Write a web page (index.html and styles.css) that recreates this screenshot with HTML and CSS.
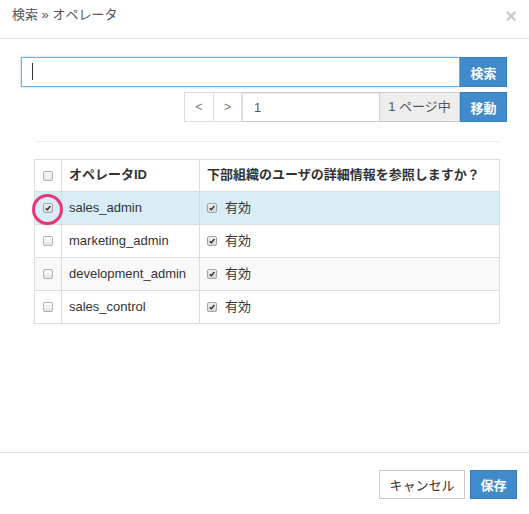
FILE: index.html
```html
<!DOCTYPE html>
<html lang="ja">
<head>
    <meta charset="UTF-8">
    <meta name="viewport" content="width=device-width, initial-scale=1.0">
    <title>検索 » オペレータ</title>
    <link rel="stylesheet" href="styles.css">
</head>
<body>
    <div class="modal">
        <div class="modal-header">
            <div class="modal-title">検索 » オペレータ</div>
            <button class="close" type="button">×</button>
        </div>

        <div class="modal-body">
            <div class="search-row">
                <div class="search-field">
                    <input type="text" class="search-input">
                    <span class="caret"></span>
                </div>
                <button class="btn btn-primary" type="button">検索</button>
            </div>

            <div class="pager">
                <button class="btn btn-page" type="button">&lt;</button>
                <button class="btn btn-page" type="button">&gt;</button>
                <input type="text" class="page-input" value="1">
                <span class="page-addon">1 ページ中</span>
                <button class="btn btn-primary" type="button">移動</button>
            </div>

            <div class="divider"></div>

            <table class="result-table">
                <colgroup>
                    <col class="w-check">
                    <col class="w-id">
                    <col>
                </colgroup>
                <thead>
                    <tr>
                        <th class="col-check"><span class="cb"></span></th>
                        <th>オペレータID</th>
                        <th>下部組織のユーザの詳細情報を参照しますか？</th>
                    </tr>
                </thead>
                <tbody>
                    <tr class="selected">
                        <td class="col-check">
                            <span class="cb checked"><svg viewBox="0 0 10 10"><path d="M2.2 5.2 L4.2 7.2 L8 2.6"/></svg></span>
                            <span class="mark"></span>
                        </td>
                        <td>sales_admin</td>
                        <td><span class="cb checked"><svg viewBox="0 0 10 10"><path d="M2.2 5.2 L4.2 7.2 L8 2.6"/></svg></span><span class="flag">有効</span></td>
                    </tr>
                    <tr>
                        <td class="col-check"><span class="cb"></span></td>
                        <td>marketing_admin</td>
                        <td><span class="cb checked"><svg viewBox="0 0 10 10"><path d="M2.2 5.2 L4.2 7.2 L8 2.6"/></svg></span><span class="flag">有効</span></td>
                    </tr>
                    <tr class="striped">
                        <td class="col-check"><span class="cb"></span></td>
                        <td>development_admin</td>
                        <td><span class="cb checked"><svg viewBox="0 0 10 10"><path d="M2.2 5.2 L4.2 7.2 L8 2.6"/></svg></span><span class="flag">有効</span></td>
                    </tr>
                    <tr>
                        <td class="col-check"><span class="cb"></span></td>
                        <td>sales_control</td>
                        <td><span class="cb checked"><svg viewBox="0 0 10 10"><path d="M2.2 5.2 L4.2 7.2 L8 2.6"/></svg></span><span class="flag">有効</span></td>
                    </tr>
                </tbody>
            </table>
        </div>

        <div class="modal-footer">
            <button class="btn btn-default" type="button">キャンセル</button>
            <button class="btn btn-primary" type="button">保存</button>
        </div>
    </div>
</body>
</html>
```

FILE: styles.css
```css
body {
    margin: 0;
    font-family: "Liberation Sans", "Noto Sans CJK JP", sans-serif;
    font-size: 13px;
    color: #333;
    background: #fff;
}

.modal {
    width: 529px;
}

.modal-header {
    box-sizing: border-box;
    height: 39px;
    padding: 7px 12px 0 12px;
    display: flex;
    justify-content: space-between;
    align-items: flex-start;
    border-bottom: 1px solid #e5e5e5;
}

.modal-title {
    color: #555;
    font-size: 13px;
    line-height: 16px;
}

.close {
    border: none;
    background: none;
    padding: 0;
    font-family: "Liberation Sans", sans-serif;
    font-size: 20px;
    font-weight: bold;
    line-height: 18px;
    color: #000;
    opacity: 0.2;
}

.modal-body {
    box-sizing: border-box;
    height: 413px;
    padding-top: 18px;
}

.btn {
    box-sizing: border-box;
    height: 30px;
    padding: 0 10px;
    border: 1px solid #ccc;
    background: #fff;
    font-family: "Liberation Sans", "Noto Sans CJK JP", sans-serif;
    font-size: 13px;
    color: #333;
    border-radius: 0;
}

.btn-primary {
    width: 47px;
    padding: 0;
    background: #428bca;
    border-color: #357ebd;
    color: #fff;
    font-weight: bold;
}

.search-row {
    display: flex;
    margin: 0 22px 0 21px;
}

.search-field {
    position: relative;
    flex: 1;
    display: flex;
}

.search-input {
    box-sizing: border-box;
    flex: 1;
    height: 30px;
    margin: 0;
    border: 1px solid #66afe9;
    outline: none;
    box-shadow: 0 0 3px rgba(102, 175, 233, 0.5);
}

.caret {
    position: absolute;
    left: 11px;
    top: 6px;
    width: 1px;
    height: 17px;
    background: #333;
}

.pager {
    display: flex;
    justify-content: flex-end;
    margin: 5px 22px 0 0;
}

.btn-page {
    width: 30px;
    padding: 0;
    color: #777;
    font-size: 12px;
    border-color: #ddd;
}

.btn-page + .btn-page {
    width: 28px;
    border-left: none;
}

.page-input {
    box-sizing: border-box;
    width: 138px;
    height: 30px;
    margin: 0;
    padding: 0 11px;
    border: 1px solid #ccc;
    border-left-color: #ddd;
    box-shadow: inset 0 1px 1px rgba(0, 0, 0, 0.075);
    font-family: "Liberation Sans", "Noto Sans CJK JP", sans-serif;
    font-size: 13px;
    color: #555;
}

.page-addon {
    box-sizing: border-box;
    width: 80px;
    height: 30px;
    line-height: 28px;
    text-align: center;
    background: #eee;
    border: 1px solid #ccc;
    border-left: none;
    color: #555;
}

.divider {
    margin: 19px 29px 0 34px;
    border-top: 1px solid #eee;
}

.result-table {
    width: 466px;
    margin: 17px 0 0 34px;
    table-layout: fixed;
    border-collapse: collapse;
    border: 1px solid #ddd;
}

.w-check {
    width: 27px;
}

.w-id {
    width: 138px;
}

.result-table th,
.result-table td {
    border: 1px solid #ddd;
    padding: 7px 7px;
    line-height: 18px;
    text-align: left;
    vertical-align: middle;
    white-space: nowrap;
}

.result-table th {
    padding: 6px 7px 7px 7px;
    font-weight: bold;
}

.result-table .col-check {
    position: relative;
    padding: 0 0 0 8px;
}

.result-table tr.selected td {
    background: #d9edf7;
}

.result-table tr.striped td {
    background: #f9f9f9;
}

.cb {
    box-sizing: border-box;
    display: inline-block;
    width: 10px;
    height: 10px;
    vertical-align: -1px;
    border: 1px solid #b0b0b0;
    border-radius: 2px;
    background: linear-gradient(#fff, #e4e4e4);
}

.cb.checked {
    background: linear-gradient(#f2f2f2, #d6d6d6);
    border-color: #a6a6a6;
}

.cb svg {
    display: block;
    width: 8px;
    height: 8px;
}

.cb svg path {
    fill: none;
    stroke: #333;
    stroke-width: 1.8;
}

.flag {
    margin-left: 8px;
}

.mark {
    position: absolute;
    left: -3px;
    top: 2px;
    box-sizing: border-box;
    width: 31px;
    height: 31px;
    border: 3px solid #ea3577;
    border-radius: 50%;
}

.modal-footer {
    display: flex;
    justify-content: flex-end;
    gap: 5px;
    padding: 17px 12px 0 0;
    border-top: 1px solid #e5e5e5;
}

.modal-footer .btn-default {
    width: 86px;
    padding: 0;
    height: 29px;
}

.modal-footer .btn-primary {
    height: 29px;
}
```
